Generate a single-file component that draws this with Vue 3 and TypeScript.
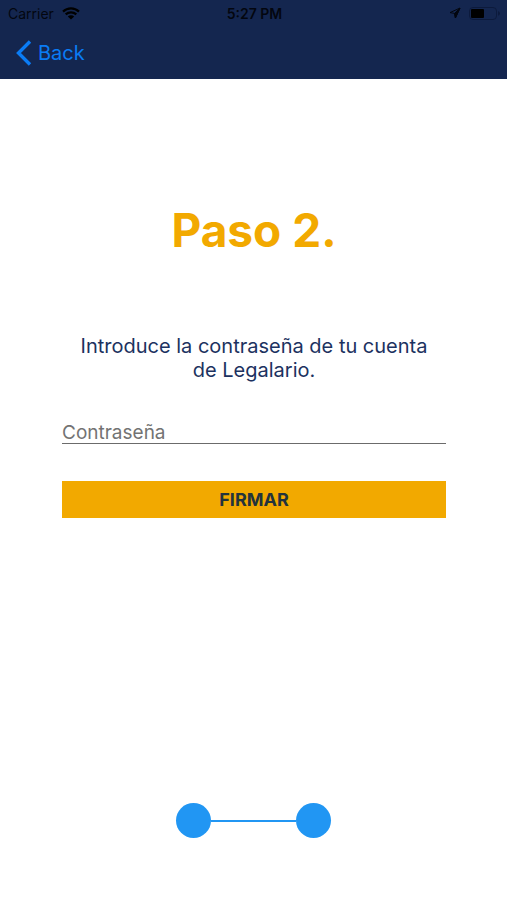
<script setup lang="ts">
import { ref } from 'vue'

const password = ref('')
const steps: number[] = [1, 2]
</script>

<template>
  <div class="screen">
    <header class="top">
      <div class="status">
        <div class="carrier">
          <span>Carrier</span>
          <svg class="wifi" viewBox="0 0 18 13" aria-hidden="true">
            <path d="M1 4.6a11.6 11.6 0 0 1 16 0" />
            <path d="M3.7 7.4a7.8 7.8 0 0 1 10.6 0" />
            <path class="dot" d="M9 12.6 5.8 9.5a4.6 4.6 0 0 1 6.4 0z" />
          </svg>
        </div>
        <span class="time">5:27 PM</span>
        <div class="indicators">
          <svg class="location" viewBox="0 0 12 12" aria-hidden="true">
            <path d="M11 1 1 5.6l4.6.8L6.4 11z" />
            <path class="fill" d="M11 1 5.6 6.4 6.4 11z" />
          </svg>
          <svg class="battery" viewBox="0 0 32 13" aria-hidden="true">
            <rect class="case" x="0.5" y="0.5" width="27" height="12" rx="3.5" />
            <rect x="2" y="2" width="13" height="9" rx="1" />
            <path class="cap" d="M29 4.3c2.6.6 2.6 3.8 0 4.4z" />
          </svg>
        </div>
      </div>
      <nav class="nav">
        <a class="back" href="#">
          <svg viewBox="0 0 16 26" aria-hidden="true">
            <path d="M14 1.5 2.5 13 14 24.5" />
          </svg>
          <span>Back</span>
        </a>
      </nav>
    </header>

    <main class="content">
      <h1>Paso 2.</h1>
      <p class="intro">Introduce la contraseña de tu cuenta de Legalario.</p>
      <form @submit.prevent>
        <input
          v-model="password"
          type="password"
          placeholder="Contraseña"
          aria-label="Contraseña"
        />
        <button type="submit">FIRMAR</button>
      </form>
    </main>

    <footer class="steps">
      <span v-for="step in steps" :key="step" class="step"></span>
    </footer>
  </div>
</template>

<style>
body {
  margin: 0;
  background: #fff;
}
</style>

<style scoped>
.screen {
  display: flex;
  flex-direction: column;
  min-height: 100vh;
  font-family: Inter, "Liberation Sans", sans-serif;
  color: #1c3260;
}

.top {
  background: #14264f;
}

.status {
  display: grid;
  grid-template-columns: 1fr auto 1fr;
  align-items: center;
  height: 26px;
  padding: 0 6px 0 8px;
  font-size: 14px;
  color: #03060f;
}

.carrier,
.indicators {
  display: flex;
  align-items: center;
  gap: 8px;
}

.indicators {
  justify-content: flex-end;
}

.time {
  font-weight: 600;
}

.wifi {
  width: 18px;
  height: 13px;
  fill: none;
  stroke: #000;
  stroke-width: 2.2;
}

.wifi .dot {
  fill: #000;
  stroke: none;
}

.location {
  width: 12px;
  height: 12px;
  fill: none;
  stroke: #03060f;
  stroke-linejoin: round;
}

.location .fill {
  fill: #03060f;
}

.battery {
  width: 32px;
  height: 13px;
}

.battery .case {
  fill: none;
  stroke: #0c1a3c;
}

.battery .cap {
  fill: #0c1a3c;
}

.nav {
  display: flex;
  align-items: center;
  height: 53px;
  padding: 0 16px;
}

.back {
  display: flex;
  align-items: center;
  gap: 6px;
  font-size: 20px;
  line-height: 24px;
  color: #0a7cf5;
  text-decoration: none;
}

.back svg {
  width: 16px;
  height: 26px;
  fill: none;
  stroke: currentColor;
  stroke-width: 3.4;
}

.content {
  flex: 1;
  padding: 119px 61px 0 62px;
}

h1 {
  margin: 0;
  font-size: 46px;
  line-height: 64px;
  font-weight: 700;
  text-align: center;
  color: #f2a900;
}

.intro {
  margin: 72px 0 0;
  padding: 0 12px;
  font-size: 20px;
  line-height: 24px;
  text-align: center;
}

form {
  display: flex;
  flex-direction: column;
  gap: 37px;
  margin-top: 37px;
}

input {
  height: 25px;
  padding: 2px 0 0;
  box-sizing: border-box;
  border: 0;
  border-bottom: 1px solid #6b6b6b;
  border-radius: 0;
  outline: 0;
  background: transparent;
  font: inherit;
  font-size: 19px;
  color: #1c3260;
}

input::placeholder {
  color: #737373;
  opacity: 1;
}

button {
  height: 37px;
  padding: 0;
  border: 0;
  background: #f2a900;
  font: inherit;
  font-size: 18px;
  font-weight: 700;
  color: #23333d;
  cursor: pointer;
}

.steps {
  display: flex;
  align-items: center;
  justify-content: center;
  padding-bottom: 62px;
}

.step {
  width: 35px;
  height: 35px;
  border-radius: 50%;
  background: #2196f3;
}

.step + .step {
  margin-left: 85px;
  position: relative;
}

.step + .step::before {
  content: "";
  position: absolute;
  top: 17px;
  right: 100%;
  width: 85px;
  height: 2px;
  background: #2196f3;
}
</style>
